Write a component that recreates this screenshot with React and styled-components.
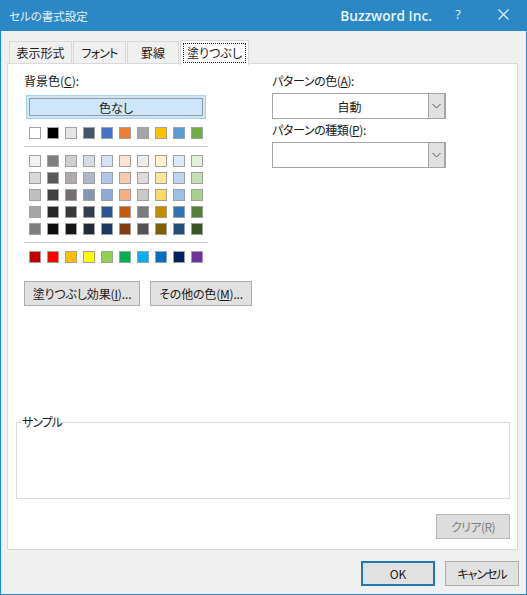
import React from "react";
import styled, { createGlobalStyle } from "styled-components";

const Global = createGlobalStyle`
  html, body { margin: 0; padding: 0; background: #f0f0f0; }
  body { font-family: "Noto Sans CJK JP", "Liberation Sans", sans-serif; font-size: 12px; color: #1a1a1a; font-feature-settings: "palt"; }
  * { box-sizing: border-box; }
`;

const Win = styled.div`
  width: 527px; height: 595px; display: flex; flex-direction: column;
  border: 1px solid #2b88c5; border-top: 0; background: #f0f0f0;
`;
const TitleBar = styled.div`
  height: 31px; margin: 0 -1px; background: #2b88c5; color: #e4f1f9; display: flex; align-items: center;
  padding: 0 0 0 9px; flex: none;
`;
const TitleText = styled.span`font-size: 11.5px; flex: 1;`;
const Brand = styled.span`font-family: "Open Sans", sans-serif; font-weight: 600; font-size: 13.7px; margin-right: 20px; color: #e8f4fb;`;
const Help = styled.span`font-family: "Open Sans", sans-serif; font-size: 13px; width: 12px; text-align: center; margin-top: -4px; margin-right: 34px;`;
const Close = styled.svg`width: 11px; height: 11px; margin-right: 18px; margin-top: -2px;`;
const Tabs = styled.div`display: flex; align-items: flex-end; height: 33px; padding-left: 8px; flex: none; position: relative; z-index: 1; margin-bottom: -1px;`;
const Tab = styled.div`
  height: ${p => (p.$active ? 25 : 23)}px; width: ${p => p.$w}px; margin-right: ${p => (p.$active ? 0 : 1)}px;
  border: 1px solid #d9d9d9; border-bottom: ${p => (p.$active ? "0" : "1px solid #d9d9d9")};
  background: ${p => (p.$active ? "#fff" : "#f0f0f0")}; display: flex; align-items: center; justify-content: center;
  margin-bottom: ${p => (p.$active ? -1 : 0)}px; letter-spacing: ${p => p.$ls || 0}px;
`;
const Focus = styled.span`outline: 1px dotted #222; padding: 0 3px; line-height: 17px; height: 18px;`;
const Panel = styled.div`
  margin-left: 6px; width: 511px; height: 487px; background: #fff; border: 1px solid #d9d9d9; flex: none;
  display: flex; flex-direction: column; padding: 0 7px 0 8px;
`;
const Columns = styled.div`display: flex; height: 351px; flex: none;`;
const Left = styled.div`width: 256px; padding: 8px 0 0 8px; flex: none;`;
const Right = styled.div`flex: 1; padding-top: 8px;`;
const Label = styled.div`line-height: 18px; height: 18px; letter-spacing: ${p => p.$ls || 0}px;`;
const NoColor = styled.div`
  margin: 5px 0 0 2px; width: 180px; height: 24px; background: #cde6f9; border: 1px solid #a9d2ee; padding: 2px;
`;
const NoColorInner = styled.div`
  height: 18px; border: 1px solid #9a9a9a; display: flex; align-items: center; justify-content: center; background: #cde6f9; width: 174px;
`;
const SwatchRow = styled.div`display: flex; gap: 6px; padding-left: 5px; height: 12px; margin-top: ${p => p.$mt}px;`;
const Swatch = styled.div`width: 12px; height: 12px; border: 1px solid #a0a0a0; background: ${p => p.$c};`;
const Rule = styled.div`height: 1px; width: 184px; background: #c8c8c8; margin-top: ${p => p.$mt}px;`;
const Buttons = styled.div`display: flex; gap: 10px; margin-top: 18px;`;
const Btn = styled.div`
  width: ${p => p.$w}px; height: 25px; background: #e1e1e1; border: 1px solid #adadad; display: flex; align-items: center; justify-content: center; flex: none;
  letter-spacing: ${p => p.$ls || 0}px;
`;
const Select = styled.div`
  width: 174px; height: 26px; border: 1px solid #a5a5a5; display: flex; background: #fff; margin: ${p => p.$m};
`;
const SelectValue = styled.div`flex: 1; display: flex; align-items: center; justify-content: center; padding-right: 2px;`;
const Arrow = styled.div`
  width: 17px; background: #e1e1e1; border: 1px solid #a5a5a5; border-width: 0 1px 0 1px; display: flex; align-items: center; justify-content: center;
`;
const Field = styled.fieldset`
  margin: 0; padding: 0; width: 494px; height: 84px; border: 1px solid #dcdcdc; flex: none;
`;
const Legend = styled.legend`padding: 0; margin-left: 5px; font-size: 12px; line-height: 14px; background: #fff; letter-spacing: -1px;`;
const ClearRow = styled.div`display: flex; justify-content: flex-end; margin-top: 15px;`;
const Clear = styled(Btn)`color: #7e7e7e; background: #ddd; border-color: #b8b8b8;`;
const Footer = styled.div`display: flex; justify-content: flex-end; gap: 10px; padding: 11px 7px 0 0;`;
const Ok = styled(Btn)`border: 2px solid #1f78b4;`;

const Ul = styled.span`text-decoration: underline; text-underline-offset: 1px;`;

const theme = ["#ffffff","#000000","#e7e6e6","#44546a","#4472c4","#ed7d31","#a5a5a5","#ffc000","#5b9bd5","#70ad47"];
const tints = [
  ["#f2f2f2","#7f7f7f","#d0cece","#d6dce4","#d9e2f3","#fbe4d5","#ededed","#fff2cc","#deeaf6","#e2efd9"],
  ["#d9d9d9","#595959","#aeaaaa","#adb9ca","#b4c6e7","#f7caac","#dbdbdb","#ffe599","#bdd6ee","#c5e0b3"],
  ["#bfbfbf","#404040","#757070","#8496b0","#8eaadb","#f4b083","#c9c9c9","#ffd966","#9cc2e5","#a8d08d"],
  ["#a6a6a6","#262626","#3a3838","#323e4f","#2f5496","#c55a11","#7b7b7b","#bf8f00","#2e74b5","#538135"],
  ["#7f7f7f","#0d0d0d","#171616","#222a35","#1f3864","#833c0b","#525252","#7f6000","#1f4e79","#385623"],
];
const standard = ["#c00000","#ff0000","#ffc000","#ffff00","#92d050","#00b050","#00b0f0","#0070c0","#002060","#7030a0"];

const Row = ({ colors, mt }) => (
  <SwatchRow $mt={mt}>{colors.map((c, i) => <Swatch key={i} $c={c} />)}</SwatchRow>
);

const Chevron = () => (
  <svg width="9" height="6" viewBox="0 0 9 6"><path d="M0.5 1 L4.5 5 L8.5 1" fill="none" stroke="#555" strokeWidth="1" /></svg>
);

export default function App() {
  return (
    <>
      <Global />
      <Win>
        <TitleBar>
          <TitleText>セルの書式設定</TitleText>
          <Brand>Buzzword Inc.</Brand>
          <Help>?</Help>
          <Close viewBox="0 0 11 11"><path d="M0.5 0.5 L10.5 10.5 M10.5 0.5 L0.5 10.5" stroke="#e8f4fb" strokeWidth="1.1" fill="none" /></Close>
        </TitleBar>
        <Tabs>
          <Tab $w={63}>表示形式</Tab>
          <Tab $w={53} $ls={-0.8}>フォント</Tab>
          <Tab $w={52}>罫線</Tab>
          <Tab $w={69} $active><Focus>塗りつぶし</Focus></Tab>
        </Tabs>
        <Panel>
          <Columns>
            <Left>
              <Label>背景色(<Ul>C</Ul>):</Label>
              <NoColor><NoColorInner>色なし</NoColorInner></NoColor>
              <Row colors={theme} mt={8} />
              <Rule $mt={7} />
              {tints.map((r, i) => <Row key={i} colors={r} mt={i === 0 ? 8 : 5} />)}
              <Rule $mt={7} />
              <Row colors={standard} mt={8} />
              <Buttons>
                <Btn $w={116} $ls={-0.15}>塗りつぶし効果(<Ul>I</Ul>)...</Btn>
                <Btn $w={102} $ls={-0.2}>その他の色(<Ul>M</Ul>)...</Btn>
              </Buttons>
            </Left>
            <Right>
              <Label $ls={-0.4}>パターンの色(<Ul>A</Ul>):</Label>
              <Select $m="3px 0 2px 0"><SelectValue>自動</SelectValue><Arrow><Chevron /></Arrow></Select>
              <Label $ls={-0.4}>パターンの種類(<Ul>P</Ul>):</Label>
              <Select $m="3px 0 0 0"><SelectValue /><Arrow><Chevron /></Arrow></Select>
            </Right>
          </Columns>
          <Field><Legend>サンプル</Legend></Field>
          <ClearRow><Clear $w={74} $ls={-0.6}>クリア(R)</Clear></ClearRow>
        </Panel>
        <Footer>
          <Ok $w={74}>OK</Ok>
          <Btn $w={74} $ls={-1}>キャンセル</Btn>
        </Footer>
      </Win>
    </>
  );
}
